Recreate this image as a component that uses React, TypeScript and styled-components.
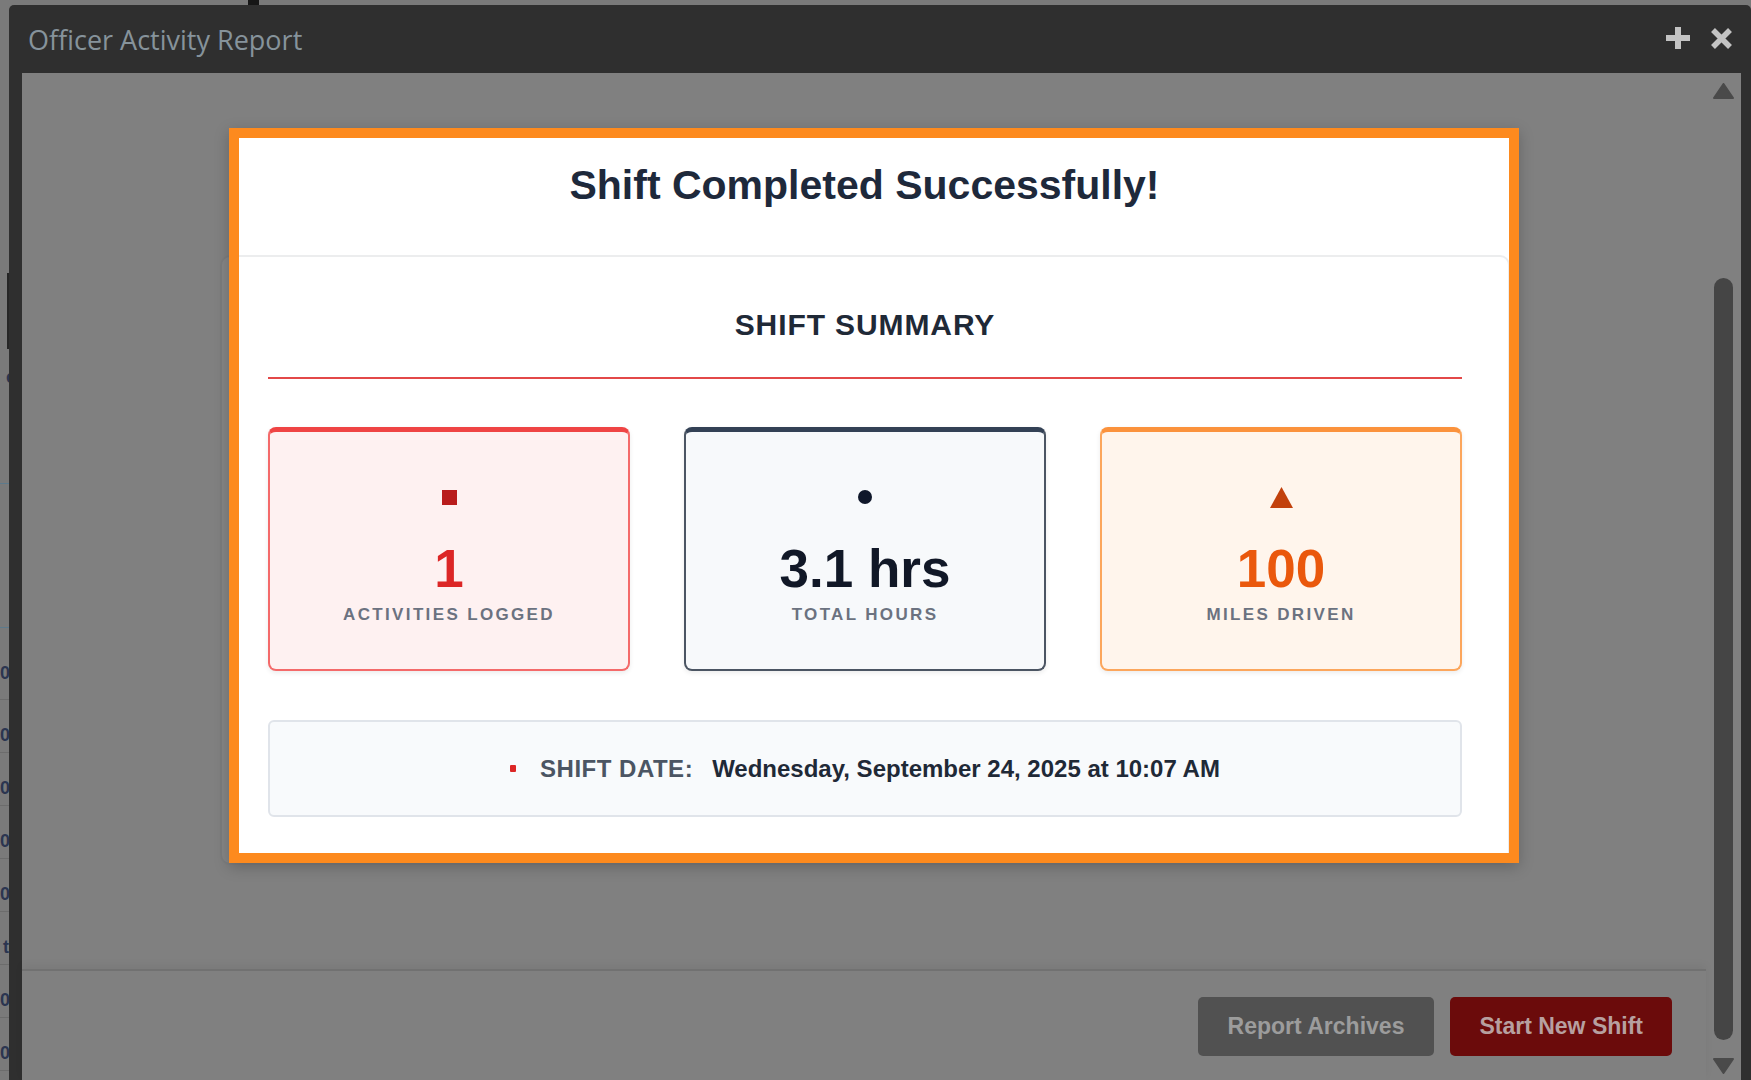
import styled, { createGlobalStyle } from 'styled-components';

const GlobalStyle = createGlobalStyle`
  * { box-sizing: border-box; }
  html, body { margin: 0; padding: 0; }
  body {
    width: 1751px;
    height: 1080px;
    overflow: hidden;
    background: #7a7a7a;
    font-family: 'Liberation Sans', Arial, sans-serif;
  }
`;

type Tone = 'red' | 'slate' | 'orange';

const tones: Record<Tone, { bg: string; side: string; top: string; value: string; icon: string }> = {
  red: { bg: '#fef1f1', side: '#f46a6a', top: '#ef4444', value: '#dc2626', icon: '#b91c1c' },
  slate: { bg: '#f7f9fb', side: '#4b5563', top: '#334155', value: '#111827', icon: '#0f172a' },
  orange: { bg: '#fff5ec', side: '#fca65c', top: '#fb923c', value: '#ea580c', icon: '#c2410c' },
};

const stats: { tone: Tone; value: string; label: string }[] = [
  { tone: 'red', value: '1', label: 'Activities Logged' },
  { tone: 'slate', value: '3.1 hrs', label: 'Total Hours' },
  { tone: 'orange', value: '100', label: 'Miles Driven' },
];

// rows of the table that sits behind the report window
const backRows = [72, 53, 53, 53, 53, 53, 53, 53];

function StatIcon({ tone }: { tone: Tone }) {
  const fill = tones[tone].icon;
  if (tone === 'red') {
    return (
      <svg width='15' height='15' viewBox='0 0 15 15'>
        <rect width='15' height='15' fill={fill} />
      </svg>
    );
  }
  if (tone === 'slate') {
    return (
      <svg width='14' height='14' viewBox='0 0 14 14'>
        <circle cx='7' cy='7' r='7' fill={fill} />
      </svg>
    );
  }
  return (
    <svg width='23' height='21' viewBox='0 0 23 21'>
      <polygon points='11.5,0 23,21 0,21' fill={fill} />
    </svg>
  );
}

export default function App() {
  return (
    <>
      <GlobalStyle />
      <Screen>
        <BackHeader>
          <BackMarker />
          <BackColumn>Activities</BackColumn>
          <BackColumn>Locations</BackColumn>
        </BackHeader>
        <BackList>
          <BackGrip />
          <BackCell>c</BackCell>
          <BackRule $accent />
          <BackRows>
            {backRows.map((h, i) => (
              <BackRow key={i} style={{ height: h }}>
                <BackCell>{i === 5 ? 't' : '0'}</BackCell>
              </BackRow>
            ))}
          </BackRows>
        </BackList>

        <Window>
          <TitleBar>
            <WindowTitle>Officer Activity Report</WindowTitle>
            <TitleActions>
              <TitleButton aria-label='Add'>
                <svg width='24' height='22' viewBox='0 0 24 22'>
                  <rect x='9' y='0' width='6' height='22' fill='currentColor' />
                  <rect x='0' y='8' width='24' height='6' fill='currentColor' />
                </svg>
              </TitleButton>
              <TitleButton aria-label='Close'>
                <svg width='21' height='21' viewBox='0 0 21 21'>
                  <path d='M2 2 L19 19 M19 2 L2 19' stroke='currentColor' strokeWidth='5.5' />
                </svg>
              </TitleButton>
            </TitleActions>
          </TitleBar>

          <Body>
            <MainColumn>
              <Content />
              <Footer>
                <FooterButton $variant='muted'>Report Archives</FooterButton>
                <FooterButton $variant='danger'>Start New Shift</FooterButton>
              </Footer>
            </MainColumn>

            <ScrollColumn>
              <svg width='21' height='16' viewBox='0 0 21 16'>
                <path d='M10.5 1 L20 15 L1 15 Z' fill='#4a4a4a' stroke='#4a4a4a' strokeLinejoin='round' strokeWidth='2' />
              </svg>
              <ScrollTrack>
                <ScrollThumb />
              </ScrollTrack>
              <svg width='21' height='16' viewBox='0 0 21 16'>
                <path d='M1 1 L20 1 L10.5 15 Z' fill='#4a4a4a' stroke='#4a4a4a' strokeLinejoin='round' strokeWidth='2' />
              </svg>
            </ScrollColumn>

            <Modal>
              <ModalHeader>
                <ModalTitle>Shift Completed Successfully!</ModalTitle>
              </ModalHeader>
              <SummaryCard>
                <SummaryHeading>Shift Summary</SummaryHeading>
                <StatGrid>
                  {stats.map((s) => (
                    <StatCard key={s.label} $tone={s.tone}>
                      <IconSlot>
                        <StatIcon tone={s.tone} />
                      </IconSlot>
                      <StatValue $tone={s.tone}>{s.value}</StatValue>
                      <StatLabel>{s.label}</StatLabel>
                    </StatCard>
                  ))}
                </StatGrid>
                <DateBox>
                  <Bullet />
                  <DateLabel>Shift Date:</DateLabel>
                  <DateValue>Wednesday, September 24, 2025 at 10:07 AM</DateValue>
                </DateBox>
              </SummaryCard>
            </Modal>
          </Body>
        </Window>
      </Screen>
    </>
  );
}

const Screen = styled.div`
  position: relative;
  width: 1751px;
  height: 1080px;
  overflow: hidden;
  background: #7a7a7a;
`;

const BackHeader = styled.div`
  position: absolute;
  top: -19px;
  left: 0;
  display: flex;
  align-items: flex-end;
  padding-left: 248px;
  height: 24px;
`;

const BackMarker = styled.span`
  width: 11px;
  height: 24px;
  background: #161616;
  margin-right: 695px;
`;

const BackColumn = styled.span`
  font-size: 22px;
  font-weight: 700;
  color: #1c1f2a;
  line-height: 24px;
  margin-right: 306px;
`;

const BackList = styled.div`
  position: absolute;
  top: 0;
  left: 0;
  width: 9px;
  height: 1080px;
  overflow: hidden;
  display: flex;
  flex-direction: column;
`;

const BackGrip = styled.div`
  margin: 273px 0 0 7px;
  width: 3px;
  height: 76px;
  background: #262626;
`;

const BackRule = styled.div<{ $accent?: boolean }>`
  margin-top: 96px;
  height: 1px;
  background: ${(p) => (p.$accent ? '#5d7a8c' : '#6a6a6a')};
`;

const BackRows = styled.div`
  margin-top: 143px;
  border-top: 1px solid #5d7a8c;
`;

const BackRow = styled.div`
  display: flex;
  align-items: center;
  border-bottom: 1px solid #6c6c6c;
`;

const BackCell = styled.span`
  display: block;
  width: 16px;
  font-size: 18px;
  font-weight: 700;
  color: #2b3550;
  text-align: right;
  line-height: 20px;
  &:first-of-type {
    margin-top: 18px;
  }
`;

const Window = styled.section`
  position: absolute;
  left: 9px;
  top: 5px;
  width: 1742px;
  height: 1075px;
  display: flex;
  flex-direction: column;
  background: #2f2f2f;
  border-radius: 5px 5px 0 0;
`;

const TitleBar = styled.header`
  height: 68px;
  flex: none;
  display: flex;
  align-items: center;
  justify-content: space-between;
  padding: 0 19px;
`;

const WindowTitle = styled.h1`
  margin: 0;
  font-family: 'Open Sans', 'Liberation Sans', sans-serif;
  font-weight: 400;
  font-size: 27px;
  color: #86939b;
`;

const TitleActions = styled.div`
  display: flex;
  align-items: center;
  gap: 21px;
  margin-top: -2px;
`;

const TitleButton = styled.span`
  display: flex;
  color: #c3c3c3;
`;

const Body = styled.div`
  position: relative;
  flex: 1;
  display: flex;
  margin: 0 10px 0 13px;
  background: #808080;
`;

const MainColumn = styled.div`
  flex: 1;
  display: flex;
  flex-direction: column;
`;

const Content = styled.div`
  flex: 1;
`;

const Footer = styled.footer`
  height: 111px;
  flex: none;
  display: flex;
  justify-content: flex-end;
  align-items: flex-start;
  gap: 16px;
  padding: 26px 34px 0;
  border-top: 2px solid #717171;
  box-shadow: 0 -4px 8px rgba(0, 0, 0, 0.05);
`;

const FooterButton = styled.button<{ $variant: 'muted' | 'danger' }>`
  height: 59px;
  padding: 0 ${(p) => (p.$variant === 'danger' ? 29 : 30)}px;
  border: none;
  border-radius: 5px;
  font-family: 'Liberation Sans', Arial, sans-serif;
  font-size: 23px;
  font-weight: 700;
  background: ${(p) => (p.$variant === 'danger' ? '#6b0b0b' : '#515151')};
  color: ${(p) => (p.$variant === 'danger' ? '#b7a0a0' : '#9c9c9c')};
`;

const ScrollColumn = styled.div`
  width: 35px;
  flex: none;
  display: flex;
  flex-direction: column;
  align-items: center;
  padding: 10px 0 6px;
`;

const ScrollTrack = styled.div`
  flex: 1;
  display: flex;
  flex-direction: column;
  justify-content: flex-end;
  padding-bottom: 18px;
`;

const ScrollThumb = styled.div`
  width: 19px;
  height: 762px;
  border-radius: 10px;
  background: #454545;
`;

const Modal = styled.div`
  position: absolute;
  left: 207px;
  top: 55px;
  width: 1290px;
  height: 735px;
  padding-top: 10px;
  background: #ffffff;
  box-shadow: 0 4px 14px rgba(0, 0, 0, 0.22);

  &::after {
    content: '';
    position: absolute;
    inset: 0;
    border: 10px solid #fd8a1e;
    pointer-events: none;
  }
`;

const ModalHeader = styled.div`
  height: 117px;
  display: flex;
  justify-content: center;
  align-items: flex-start;
  padding: 24px 19px 0 0;
`;

const ModalTitle = styled.h2`
  margin: 0;
  font-size: 41px;
  line-height: 46px;
  font-weight: 700;
  color: #1e293b;
`;

const SummaryCard = styled.div`
  margin-left: -9px;
  width: 1290px;
  padding: 0 46px 46px;
  border: 2px solid rgba(15, 23, 42, 0.08);
  border-radius: 10px;
  background: rgba(255, 255, 255, 0.04);
`;

const SummaryHeading = styled.h3`
  margin: 50px 0 0;
  padding-bottom: 34px;
  border-bottom: 2px solid #e34848;
  text-align: center;
  text-transform: uppercase;
  font-size: 30px;
  line-height: 36px;
  letter-spacing: 0.9px;
  font-weight: 700;
  color: #1f2937;
`;

const StatGrid = styled.div`
  margin-top: 48px;
  display: grid;
  grid-template-columns: repeat(3, 1fr);
  gap: 54px;
`;

const StatCard = styled.div<{ $tone: Tone }>`
  height: 244px;
  display: flex;
  flex-direction: column;
  align-items: center;
  padding-top: 53px;
  border: 2px solid ${(p) => tones[p.$tone].side};
  border-top: 5px solid ${(p) => tones[p.$tone].top};
  border-radius: 8px;
  background: ${(p) => tones[p.$tone].bg};
  box-shadow: 0 2px 5px rgba(0, 0, 0, 0.08);
`;

const IconSlot = styled.div`
  height: 24px;
  display: flex;
  align-items: center;
  justify-content: center;
`;

const StatValue = styled.div<{ $tone: Tone }>`
  margin-top: 31px;
  font-size: 53px;
  line-height: 57px;
  font-weight: 700;
  color: ${(p) => tones[p.$tone].value};
`;

const StatLabel = styled.div`
  margin-top: 8px;
  font-size: 17px;
  line-height: 20px;
  font-weight: 700;
  letter-spacing: 2.35px;
  text-transform: uppercase;
  color: #6b7280;
`;

const DateBox = styled.div`
  margin-top: 49px;
  height: 97px;
  display: flex;
  align-items: center;
  justify-content: center;
  background: #f8fafc;
  border: 2px solid #e0e4ea;
  border-radius: 6px;
`;

const Bullet = styled.span`
  width: 6px;
  height: 7px;
  margin-right: 24px;
  background: #dc2626;
  border-radius: 1px;
`;

const DateLabel = styled.span`
  font-size: 24px;
  font-weight: 700;
  letter-spacing: 0.5px;
  text-transform: uppercase;
  color: #4b5563;
`;

const DateValue = styled.span`
  margin-left: 19px;
  font-size: 24px;
  font-weight: 700;
  color: #1f2937;
`;
